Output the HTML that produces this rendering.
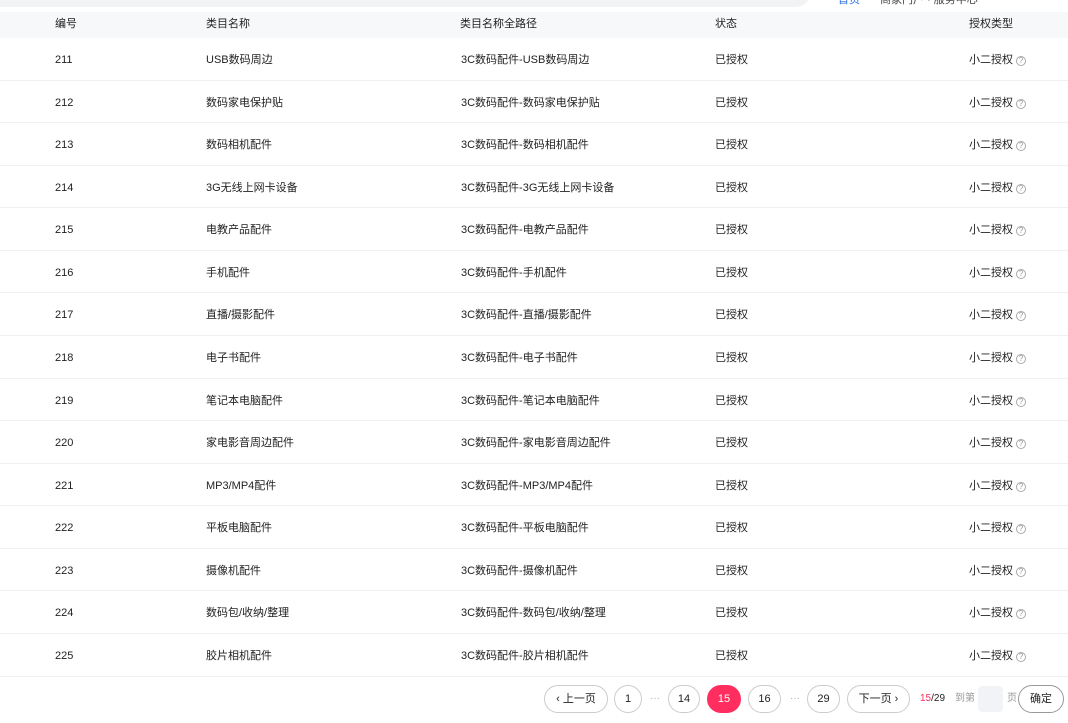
<!DOCTYPE html><html><head><meta charset="utf-8"><style>
*{margin:0;padding:0;box-sizing:border-box}
body{width:1068px;height:723px;overflow:hidden;background:#fff;font-family:"Liberation Sans","Noto Sans CJK SC",sans-serif;font-size:11px;color:#222;position:relative}
.search{position:absolute;left:-20px;top:-30px;width:830px;height:37px;background:#f2f3f5;border-radius:0 0 14px 14px}
.tlink{position:absolute;top:-9px;left:838px;color:#2a6fdb;font-size:11px}
.tlink2{position:absolute;top:-9px;left:880px;color:#444;font-size:11px}
.hdr{position:absolute;top:12px;left:0;width:1068px;height:26px;background:#f7f8fa}
.hdr .c{line-height:26px;top:-1px}
.row{position:absolute;left:0;width:1068px;height:42.6px;border-bottom:1px solid #eef0f3}
.row .c{top:1px;line-height:42px}
.c{position:absolute;white-space:nowrap}
.q{display:inline-block;width:10px;height:10px;border:1px solid #aaa;border-radius:50%;font-size:8px;line-height:8px;text-align:center;color:#999;margin-left:3px;vertical-align:0}
.pg{position:absolute;top:685px;height:28px;border:1px solid #ccc;border-radius:14px;text-align:center;line-height:26px;font-size:11px;color:#222;background:#fff}
.on{background:#ff2e5f;border-color:#ff2e5f;color:#fff}
.t{position:absolute;top:685px;line-height:28px;font-size:10px;color:#999}
</style></head><body>
<div class="search"></div>
<div class="tlink">首页</div><div class="tlink2">商家门户 · 服务中心</div>
<div class="hdr">
<span class="c" style="left:55px">编号</span>
<span class="c" style="left:206px">类目名称</span>
<span class="c" style="left:460px">类目名称全路径</span>
<span class="c" style="left:715px">状态</span>
<span class="c" style="left:969px">授权类型</span>
</div>
<div id="rows"></div>
<script>
var d=[["211","USB数码周边"],["212","数码家电保护贴"],["213","数码相机配件"],["214","3G无线上网卡设备"],["215","电教产品配件"],["216","手机配件"],["217","直播/摄影配件"],["218","电子书配件"],["219","笔记本电脑配件"],["220","家电影音周边配件"],["221","MP3/MP4配件"],["222","平板电脑配件"],["223","摄像机配件"],["224","数码包/收纳/整理"],["225","胶片相机配件"]];
var h="";d.forEach(function(r,i){var t=38+i*42.57;h+='<div class="row" style="top:'+t+'px"><span class="c" style="left:55px">'+r[0]+'</span><span class="c" style="left:206px">'+r[1]+'</span><span class="c" style="left:461px">3C数码配件-'+r[1]+'</span><span class="c" style="left:715px">已授权</span><span class="c" style="left:969px">小二授权<span class="q">?</span></span></div>'});
document.getElementById("rows").innerHTML=h;
</script>
<div class="pg" style="left:544px;width:64px">‹ 上一页</div>
<div class="pg" style="left:614px;width:28px">1</div>
<div class="t" style="left:650px;color:#aaa">···</div>
<div class="pg" style="left:668px;width:32px">14</div>
<div class="pg on" style="left:707px;width:34px">15</div>
<div class="pg" style="left:748px;width:33px">16</div>
<div class="t" style="left:790px;color:#aaa">···</div>
<div class="pg" style="left:807px;width:33px">29</div>
<div class="pg" style="left:847px;width:63px">下一页 ›</div>
<div class="t" style="left:920px;color:#222"><span style="color:#ff2e5f">15</span>/29</div>
<div class="t" style="left:955px">到第</div>
<div style="position:absolute;left:978px;top:686px;width:25px;height:26px;background:#f2f3f7;border-radius:4px"></div>
<div class="t" style="left:1007px">页</div>
<div class="pg" style="left:1018px;width:46px;border-color:#999">确定</div>
</body></html>
